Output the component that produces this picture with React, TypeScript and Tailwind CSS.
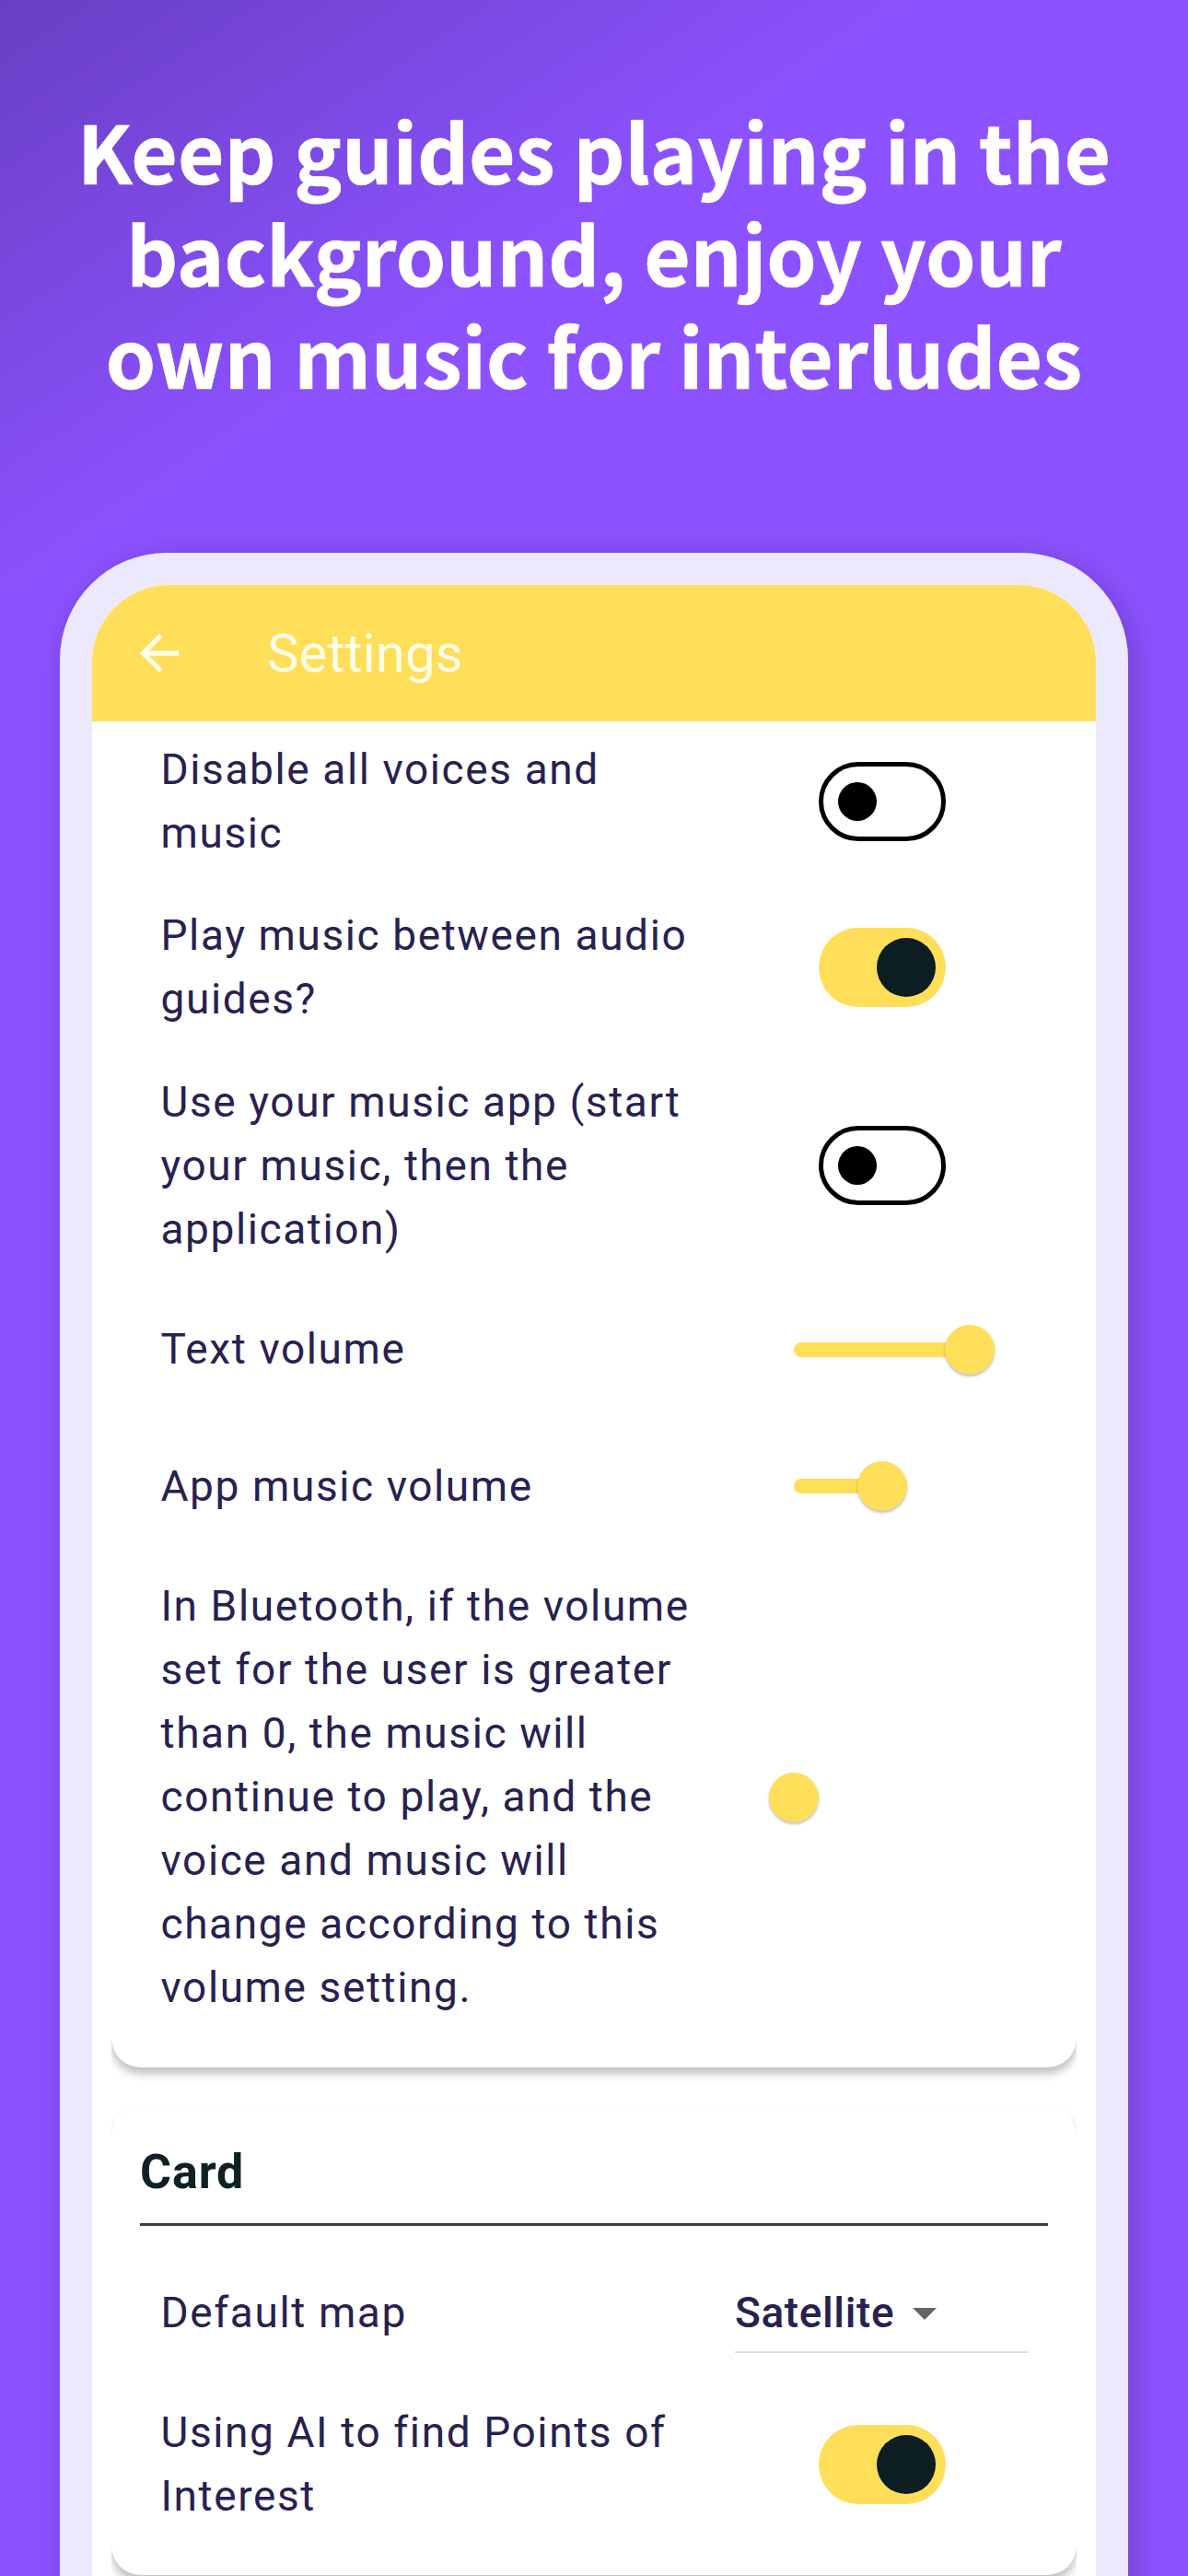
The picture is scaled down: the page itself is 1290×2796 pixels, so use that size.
import { useState } from 'react';
import type React from 'react';
import clsx from 'clsx';
import { MdArrowBack } from 'react-icons/md';

interface SettingRowProps {
  label: string;
  className?: string;
  children: React.ReactNode;
}

function SettingRow({ label, className, children }: SettingRowProps): React.ReactElement {
  return (
    <div className={clsx('flex items-center pl-[53.5px]', className)}>
      <p className="w-[591.5px] flex-shrink-0 text-[46px] leading-[69px] tracking-[1.6px]">{label}</p>
      {children}
    </div>
  );
}

function Toggle({ label, initial = false }: { label: string; initial?: boolean }): React.ReactElement {
  const [on, setOn] = useState(initial);

  return (
    <button
      role="switch"
      aria-checked={on}
      aria-label={label}
      onClick={() => setOn((v) => !v)}
      className={clsx(
        'ml-[123px] flex h-[86px] w-[138px] flex-shrink-0 items-center rounded-full',
        on ? 'justify-end bg-[#ffde59] pr-[11px]' : 'border-[5px] border-black pl-4',
      )}
    >
      <span
        className={clsx('rounded-full', on ? 'h-16 w-16 bg-[#0c1e21]' : 'h-[42px] w-[42px] bg-black')}
      />
    </button>
  );
}

function VolumeSlider({ value }: { value: number }): React.ReactElement {
  return (
    <div className="ml-24 flex w-[191px] flex-shrink-0 items-center">
      <div className="h-4 flex-shrink-0 rounded-full bg-[#ffde59]" style={{ width: `${value}%` }} />
      <div className="-ml-[27px] h-[54px] w-[54px] flex-shrink-0 rounded-full bg-[#ffde59] shadow-[0_2px_3px_rgba(0,0,0,0.25)]" />
    </div>
  );
}

export default function App(): React.ReactElement {
  return (
    <div className="flex h-[2796px] w-[1290px] flex-col items-center overflow-hidden bg-[linear-gradient(147deg,#693fc3_0px,#8c52ff_560px)]">
      <h1 className="h-[600px] flex-shrink-0 pt-[107px] text-center font-['Noto_Sans_CJK_SC',sans-serif] text-[87px] leading-[111px] font-bold whitespace-nowrap text-white [-webkit-text-stroke:0.7px_white]">
        Keep guides playing in the
        <br />
        background, enjoy your
        <br />
        own music for interludes
      </h1>

      {/* Phone frame, runs off the bottom edge */}
      <div className="h-[2300px] w-[1160px] flex-shrink-0 rounded-t-[116px] bg-[#ece8fd] px-[35px] pt-[35px] shadow-[6px_6px_32px_rgba(0,0,0,0.21)]">
        <div className="h-full overflow-hidden rounded-t-[84px] bg-white font-[Roboto,sans-serif] text-[#282150]">
          <header className="flex h-[148px] items-center bg-[#ffde59] pl-[41px] text-[#fffde8]">
            <MdArrowBack className="h-16 w-16" aria-hidden="true" />
            <span className="ml-[85px] text-[58px] leading-[64px] tracking-[0.1px]">Settings</span>
          </header>

          <div className="px-[21px]">
            {/* The cards' shadows are cut off at their sides */}
            <div className="overflow-hidden pb-10">
              <section className="h-[1461px] rounded-b-[32px] shadow-[0_7px_10px_rgba(0,0,0,0.25)]">
                <SettingRow label="Disable all voices and music" className="h-[173px]">
                  <Toggle label="Disable all voices and music" />
                </SettingRow>
                <SettingRow label="Play music between audio guides?" className="h-[188px]">
                  <Toggle label="Play music between audio guides?" initial />
                </SettingRow>
                <SettingRow
                  label="Use your music app (start your music, then the application)"
                  className="h-[242px]"
                >
                  <Toggle label="Use your music app" />
                </SettingRow>
                <SettingRow label="Text volume" className="h-[157px]">
                  <VolumeSlider value={100} />
                </SettingRow>
                <SettingRow label="App music volume" className="h-[140px]">
                  <VolumeSlider value={50} />
                </SettingRow>
                <SettingRow
                  label="In Bluetooth, if the volume set for the user is greater than 0, the music will continue to play, and the voice and music will change according to this volume setting."
                  className="h-[535px]"
                >
                  <VolumeSlider value={0} />
                </SettingRow>
              </section>
            </div>

            <div className="overflow-hidden pt-0.5 pb-10">
              <section className="h-[509px] rounded-[32px] px-[31px] pt-10 shadow-[0_7px_10px_rgba(0,0,0,0.25)]">
                <h2 className="h-[90px] border-b-3 border-[#3a4142] text-[52px] leading-[64px] font-bold tracking-[0.9px] text-[#0f2124]">
                  Card
                </h2>
                <SettingRow label="Default map" className="mt-5 -ml-[31px] h-[149px]">
                  <div className="ml-8 flex h-[86px] w-[319px] flex-shrink-0 items-center border-b-2 border-[#dedede]">
                    <span className="pt-0.5 text-[46px] font-medium tracking-[0.6px]">Satellite</span>
                    <svg width="26" height="13" viewBox="0 0 26 13" className="mt-1 ml-5" aria-hidden="true">
                      <path d="M0 0h26L13 13z" fill="#666" />
                    </svg>
                  </div>
                </SettingRow>
                <SettingRow label="Using AI to find Points of Interest" className="-ml-[31px] h-[180px]">
                  <Toggle label="Using AI to find Points of Interest" initial />
                </SettingRow>
              </section>
            </div>
          </div>
        </div>
      </div>
    </div>
  );
}
